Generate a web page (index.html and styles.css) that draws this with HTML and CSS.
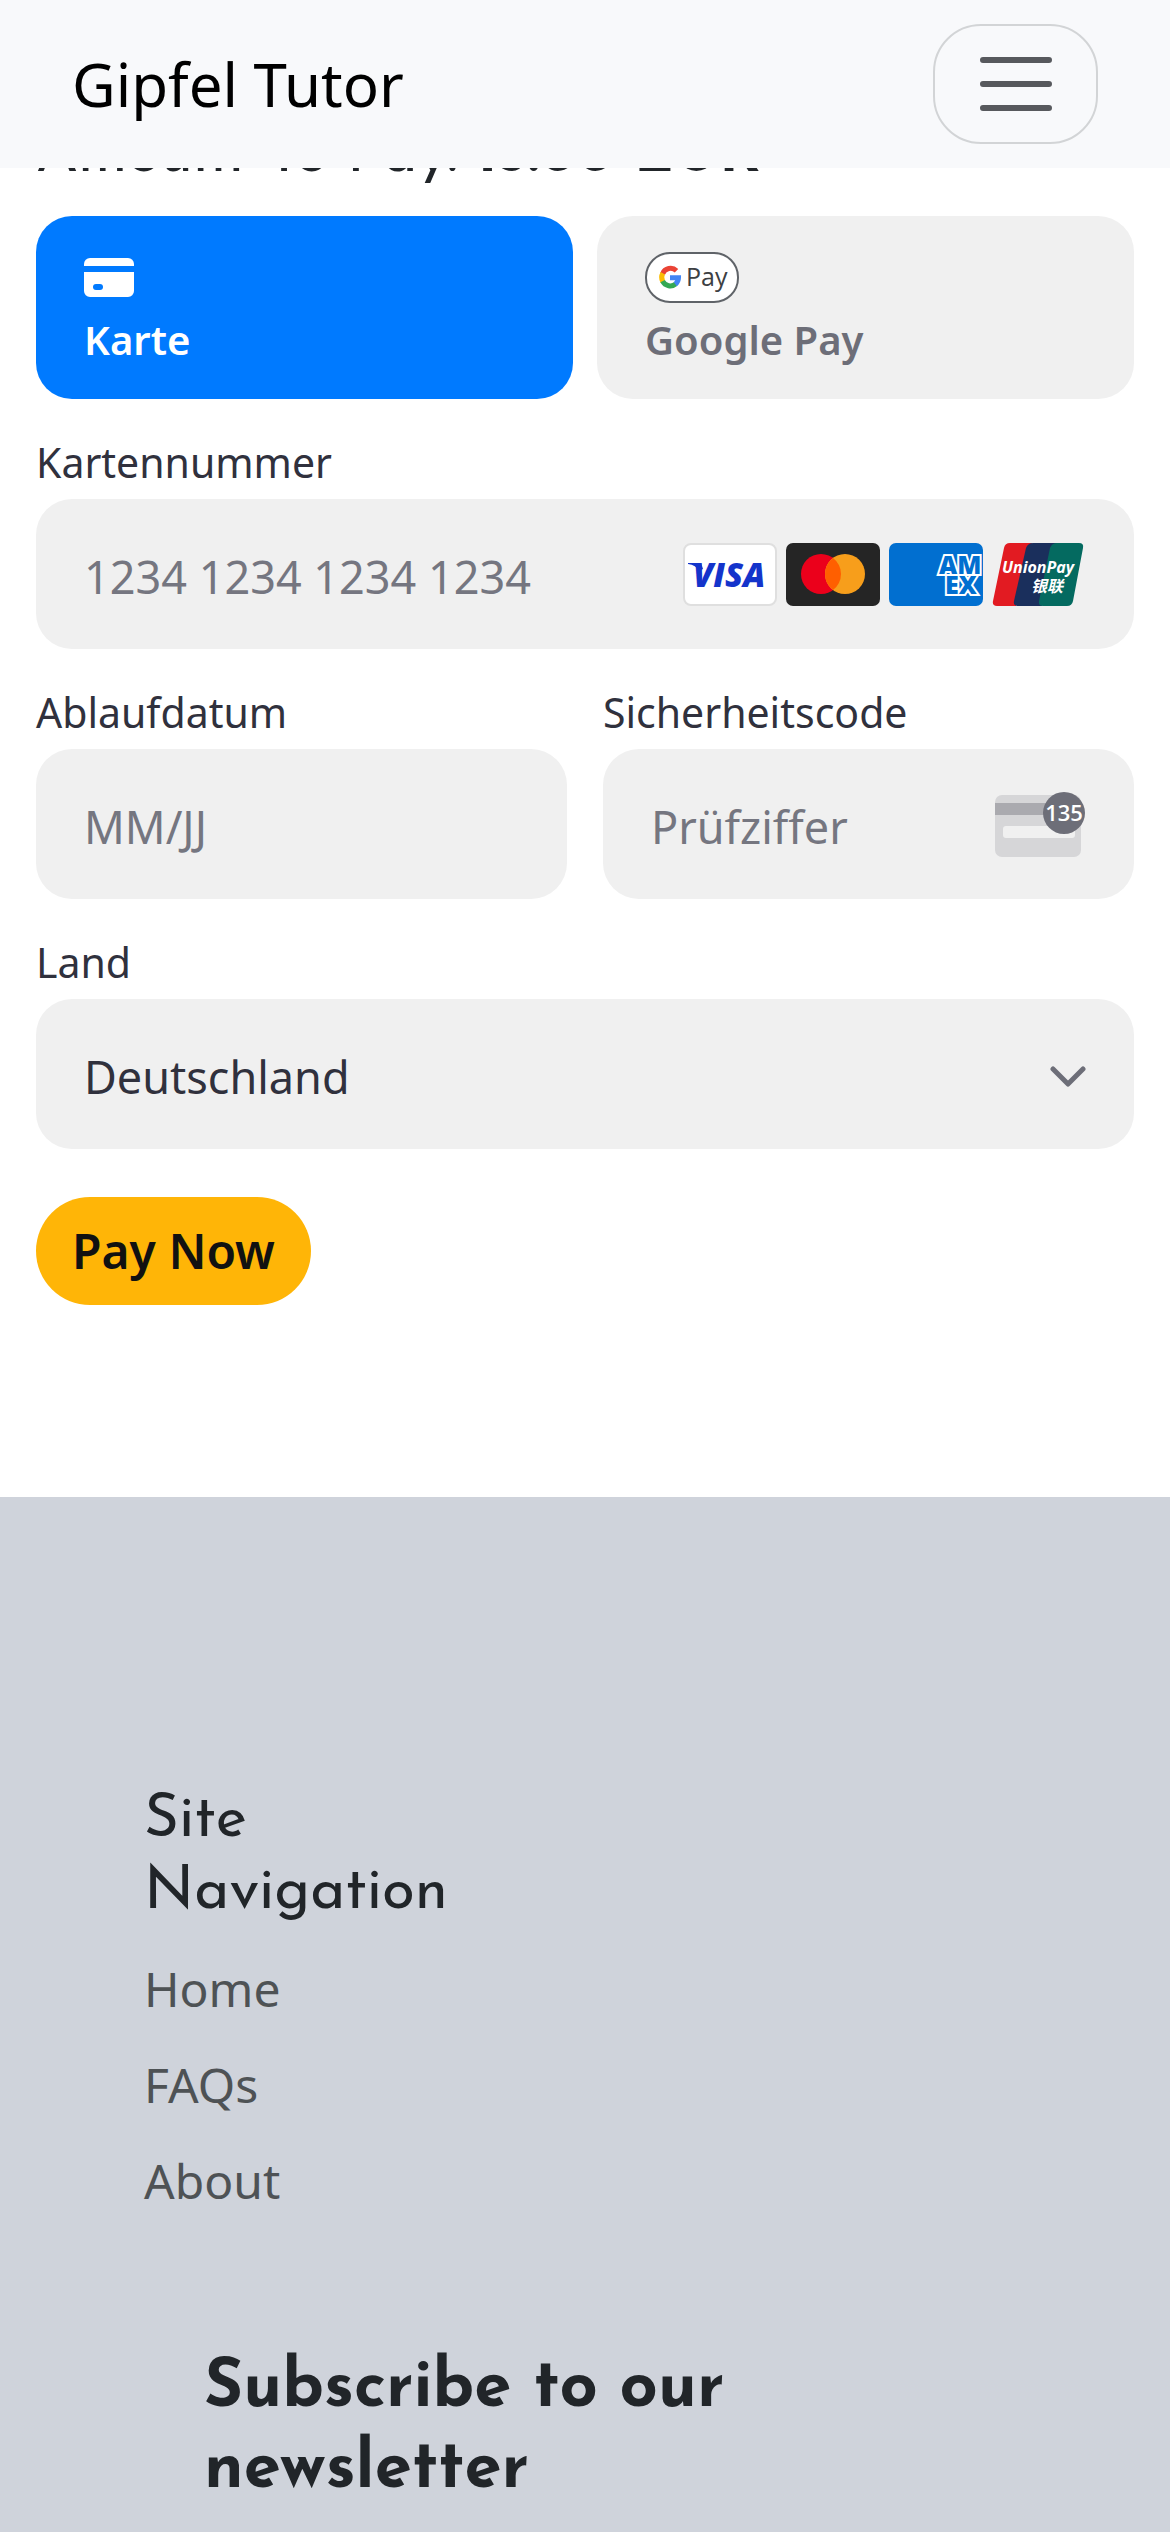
FILE: index.html
```html
<!DOCTYPE html>
<html lang="de">
<head>
<meta charset="utf-8">
<meta name="viewport" content="width=device-width, initial-scale=1">
<title>Gipfel Tutor</title>
<link rel="stylesheet" href="styles.css">
</head>
<body>
<header class="navbar">
  <a class="brand" href="#">Gipfel Tutor</a>
  <button class="toggler" type="button" aria-label="Toggle navigation">
    <svg class="toggler-icon" viewBox="0 0 30 30" aria-hidden="true"><path stroke="#57595d" stroke-width="2" stroke-linecap="round" stroke-linejoin="round" stroke-miterlimit="10" d="M4 7h22M4 15h22M4 23h22"/></svg>
  </button>
</header>

<main class="checkout">
  <h2 class="amount">Amount To Pay: <strong>15.00 EUR</strong></h2>
  <form class="payment">
    <div class="tabs">
      <button class="tab tab-active" type="button">
        <svg class="card-icon" viewBox="0 0 50 39" aria-hidden="true"><path fill="#fff" d="M6 0h38a6 6 0 0 1 6 6v2H0V6a6 6 0 0 1 6-6zM0 14h50v19a6 6 0 0 1-6 6H6a6 6 0 0 1-6-6z"/><rect x="9" y="26" width="10" height="6" rx="3" fill="#007aff"/></svg>
        <span>Karte</span>
      </button>
      <button class="tab" type="button">
        <svg class="gpay-icon" viewBox="0 0 94 51" aria-hidden="true">
          <rect x="1" y="1" width="92" height="49" rx="24" fill="#fff" stroke="#5f6368" stroke-width="2"/>
          <g fill="none" stroke-width="5">
            <path stroke="#ea4335" d="M31.500 18.700A8.500 8.500 0 0 0 17.600 21.800"/>
            <path stroke="#fbbc04" d="M17.800 21.300A8.500 8.500 0 0 0 17.800 29.700"/>
            <path stroke="#34a853" d="M17.600 29.200A8.500 8.500 0 0 0 30.800 31.800"/>
            <path stroke="#4285f4" d="M30.300 32.200A8.500 8.500 0 0 0 33.500 25.700H25"/>
          </g>
          <text class="gpay-text" x="41" y="34">Pay</text>
        </svg>
        <span>Google Pay</span>
      </button>
    </div>

    <div class="field">
      <label for="number">Kartennummer</label>
      <div class="control">
        <input id="number" type="text" inputmode="numeric" placeholder="1234 1234 1234 1234">
        <div class="brands">
          <svg viewBox="0 0 94 63" role="img" aria-label="Visa"><rect x="1" y="1" width="92" height="61" rx="7" fill="#fff" stroke="#dfdfdf" stroke-width="2"/><path fill="#1434cb" d="M5 20h13l2 6-4 2q-3-6-11-7z"/><text class="visa" x="10" y="44">VISA</text></svg>
          <svg viewBox="0 0 94 63" role="img" aria-label="Mastercard"><rect width="94" height="63" rx="7" fill="#252525"/><circle cx="35" cy="31" r="20" fill="#eb001b"/><circle cx="59" cy="31" r="20" fill="#f79e1b"/><path fill="#ff5f00" d="M47 15a20 20 0 0 1 0 32 20 20 0 0 1 0-32z"/></svg>
          <svg viewBox="0 0 94 63" role="img" aria-label="American Express"><rect width="94" height="63" rx="7" fill="#016fd0"/><g class="amex"><text x="50" y="31">AM</text><text x="56" y="51">EX</text></g></svg>
          <svg viewBox="0 0 94 63" role="img" aria-label="UnionPay"><path fill="#e21b22" d="M18 0h22L24 63H5q-5 0-4-5L12 5q1-5 6-5z"/><path fill="#1a2f5c" d="M41 0h26L50 63H26q-5 0-4-5L34 5q2-5 7-5z"/><path fill="#046a60" d="M65 0h22q5 0 4 5L81 58q-1 5-6 5H51q-5 0-4-5L58 5q2-5 7-5z"/><g class="unionpay"><text x="10" y="30">UnionPay</text><text x="39" y="49">银联</text></g></svg>
        </div>
      </div>
    </div>

    <div class="columns">
      <div class="field">
        <label for="expiry">Ablaufdatum</label>
        <div class="control"><input id="expiry" type="text" placeholder="MM/JJ"></div>
      </div>
      <div class="field">
        <label for="cvc">Sicherheitscode</label>
        <div class="control">
          <input id="cvc" type="text" placeholder="Prüfziffer">
          <svg class="cvc-icon" viewBox="0 0 91 67" aria-hidden="true"><rect y="4" width="86" height="62" rx="7" fill="#d6d6d8"/><rect y="12" width="86" height="12" fill="#aaaaaf"/><rect x="8" y="35" width="72" height="12" rx="3" fill="#f0f0f0"/><circle cx="69" cy="22" r="21" fill="#6d6e78"/><text class="cvc-text" x="69" y="30">135</text></svg>
        </div>
      </div>
    </div>

    <div class="field">
      <label for="country">Land</label>
      <div class="control">
        <select id="country"><option>Deutschland</option></select>
        <svg class="chevron" viewBox="0 0 36 28" aria-hidden="true"><path fill="none" stroke="#6d6e78" stroke-width="5" stroke-linecap="round" stroke-linejoin="round" d="M3 9l15 15L33 9"/></svg>
      </div>
    </div>
    <button class="pay" type="submit">Pay Now</button>
  </form>
</main>

<footer class="footer">
  <nav class="site-nav">
    <h5>Site<br>Navigation</h5>
    <ul>
      <li><a href="#">Home</a></li>
      <li><a href="#">FAQs</a></li>
      <li><a href="#">About</a></li>
    </ul>
  </nav>
  <section class="newsletter">
    <h4>Subscribe to our newsletter</h4>
  </section>
</footer>
</body>
</html>
```
FILE: styles.css
```css
* { box-sizing: border-box; }

body {
  margin: 0;
  background: #fff;
  color: #212529;
  font: 48px/72px "Noto Sans", sans-serif;
}

h2, h4, h5, ul { margin: 0; padding: 0; font-weight: 400; }
a { color: inherit; text-decoration: none; }
button, input, select { font: inherit; color: inherit; }

.navbar {
  position: sticky;
  top: 0;
  z-index: 1;
  display: flex;
  align-items: center;
  justify-content: space-between;
  height: 168px;
  padding: 0 72px;
  background: #f8f9fb;
}

.brand { color: #000; font-size: 60px; line-height: 90px; }

.toggler {
  display: flex;
  align-items: center;
  justify-content: center;
  width: 165px;
  height: 120px;
  padding: 0;
  border: 2px solid #d2d4d6;
  border-radius: 48px;
  background: none;
}

.toggler-icon { width: 90px; height: 90px; }

.checkout { padding: 0 36px 192px; }

.amount {
  margin-top: -48px;
  font: 60px/72px "Josefin Sans", Lato, sans-serif;
}

.payment { padding-top: 24px; }

.tabs { display: grid; grid-template-columns: 1fr 1fr; gap: 24px; }

.tab {
  display: flex;
  flex-direction: column;
  align-items: flex-start;
  justify-content: flex-end;
  height: 183px;
  padding: 0 48px 32px;
  border: 0;
  border-radius: 36px;
  background: #f0f0f0;
  color: #6d6e78;
  font-size: 40px;
  font-weight: 600;
  line-height: 54px;
}

.tab-active { background: #007aff; color: #fff; }
.card-icon { width: 50px; height: 39px; margin-bottom: 16px; }
.gpay-icon { width: 94px; height: 51px; margin-bottom: 10px; }
.gpay-text { fill: #3c4043; font: 500 25px "Open Sans", sans-serif; }

.field { display: flex; flex-direction: column; margin-top: 36px; }
.field label { color: #30313d; font-size: 41px; line-height: 54px; margin-bottom: 10px; }

.control {
  display: flex;
  align-items: center;
  height: 150px;
  padding: 0 48px;
  border-radius: 36px;
  background: #f0f0f0;
}

.control input, .control select {
  flex: 1;
  min-width: 0;
  padding: 6px 0 0;
  border: 0;
  outline: 0;
  background: none;
  color: #30313d;
  font-size: 45px;
  appearance: none;
}

.control input::placeholder { color: #757680; opacity: 1; }

.brands { display: flex; gap: 9px; }
.brands svg { width: 94px; height: 63px; }
.visa { fill: #1434cb; font: italic 800 33px "Open Sans", sans-serif; }
.amex { fill: #016fd0; stroke: #fff; stroke-width: 4px; paint-order: stroke; font: 800 25px "Open Sans", sans-serif; }
.unionpay { fill: #fff; font: italic 700 16px "Open Sans", "Noto Sans CJK SC", sans-serif; }

.columns { display: grid; grid-template-columns: repeat(2, minmax(0, 1fr)); gap: 36px; }
.cvc-icon { flex: none; width: 91px; height: 67px; }
.cvc-text { fill: #fff; font: 600 22px "Open Sans", sans-serif; text-anchor: middle; }
.chevron { width: 36px; height: 28px; }

.pay {
  height: 108px;
  margin-top: 48px;
  padding: 0 36px;
  border: 0;
  border-radius: 54px;
  background: #ffb507;
  color: #111;
  font-weight: 600;
}

.footer {
  padding: 288px 144px 48px;
  background: #cfd3db;
}

.footer h4, .footer h5 { font-family: "Josefin Sans", Lato, sans-serif; }
.site-nav h5 { font-size: 60px; line-height: 72px; }
.site-nav ul { display: grid; gap: 24px; padding-top: 24px; color: #4e5255; list-style: none; }

.newsletter { max-width: 680px; padding: 132px 60px 0; }
.newsletter h4 { font-size: 67px; font-weight: 700; line-height: 81px; }
```
